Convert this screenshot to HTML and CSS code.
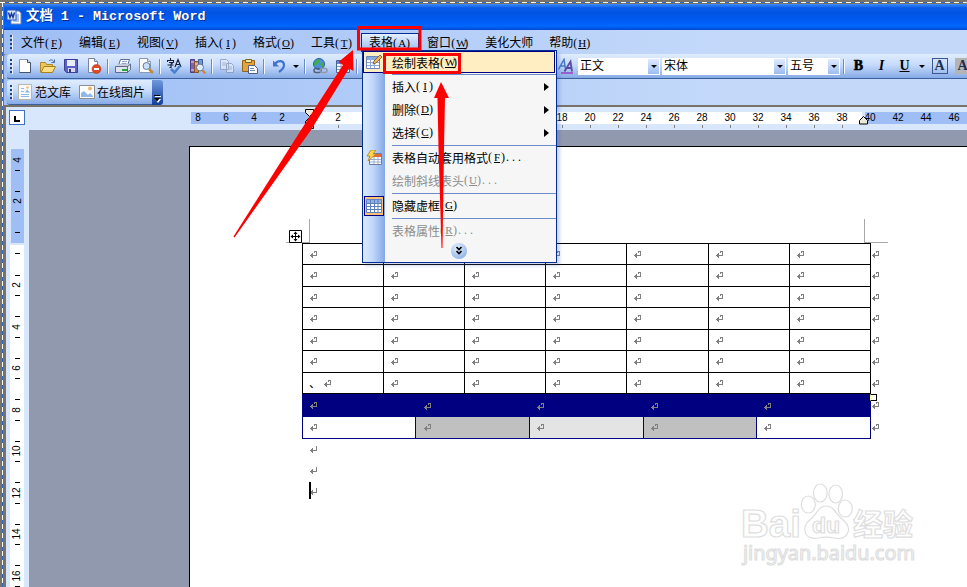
FILE: index.html
```
<!DOCTYPE html>
<html lang="zh-CN">
<head>
    <meta charset="utf-8">
    <title>文档 1 - Microsoft Word</title>
    <link rel="stylesheet" href="styles.css">
</head>
<body>
<div class="window">
    <div class="frame-top"></div>
    <div class="frame-left"></div>

    <header class="titlebar">
        <svg class="icon" viewBox="0 0 16 16">
            <path d="M5 2h8l2 2v11H5z" fill="#fff" stroke="#7183a8"/>
            <path d="M10 6h3M10 8h3M7 12h6M10 10h3" stroke="#5b86d6"/>
            <rect x="1" y="1" width="9" height="10" fill="#dce8ff" stroke="#2a5ac0"/>
            <path d="M2.500 3.500l1.500 5 1.500-4 1.500 4 1.500-5" fill="none" stroke="#143a9c" stroke-width="1.500"/>
        </svg>
        <h1>文档 1 - Microsoft Word</h1>
    </header>

    <nav class="menubar">
        <div class="grip"></div>
        <span class="menu">文件<i>(<u>F</u>)</i></span>
        <span class="menu">编辑<i>(<u>E</u>)</i></span>
        <span class="menu">视图<i>(<u>V</u>)</i></span>
        <span class="menu">插入<i>(<u>I</u>)</i></span>
        <span class="menu">格式<i>(<u>O</u>)</i></span>
        <span class="menu">工具<i>(<u>T</u>)</i></span>
        <span class="menu open">表格<i>(<u>A</u>)</i></span>
        <span class="menu">窗口<i>(<u>W</u>)</i></span>
        <span class="menu">美化大师</span>
        <span class="menu">帮助<i>(<u>H</u>)</i></span>
    </nav>

    <div class="toolbar">
        <div class="tools-left">
            <div class="grip"></div>
            <span class="btn"><svg class="icon" viewBox="0 0 16 16"><path d="M2.500 1.500h8l3 3v10h-11z" fill="#fff" stroke="#8b98b5"/><path d="M13.500 4.500v10h-11" fill="none" stroke="#44546f"/><path d="M10.500 1.500v3h3" fill="#cbdcf5" stroke="#44546f"/></svg></span>
            <span class="btn"><svg class="icon" viewBox="0 0 16 16"><path d="M.5 14V4.500h5l1 2h6V14z" fill="#f0c65a" stroke="#b08a2a"/><path d="M1 14.500l3-6h11.500l-3 6z" fill="#ffdf86" stroke="#a8801c"/><path d="M9 3c2-2 4-1 5 1M14.500 1.500v3h-3" fill="none" stroke="#4a6aa0"/></svg></span>
            <span class="btn"><svg class="icon" viewBox="0 0 16 16"><path d="M1.500 1.500h13v13h-11l-2-2z" fill="#5b60c8" stroke="#3b3f96"/><path d="M4 2h8v6H4z" fill="#e8edfa"/><path d="M5 10h7v4H5z" fill="#d5d9e8"/><path d="M6 11h2v3H6z" fill="#33387c"/></svg></span>
            <span class="btn"><svg class="icon" viewBox="0 0 16 16"><path d="M2.500.5h6l3 3v11h-9z" fill="#fff" stroke="#7583a5"/><path d="M8.500.5v3h3" fill="#d4e1f5" stroke="#7583a5"/><circle cx="10.500" cy="11" r="4.500" fill="#dc4a26" stroke="#a83010" stroke-width=".5"/><path d="M8 11h5" stroke="#fff" stroke-width="2"/></svg></span>
            <span class="sep"></span>
            <span class="btn"><svg class="icon" viewBox="0 0 16 16"><path d="M5.500 1.500h9l-2 6h-9z" fill="#fff" stroke="#5d6d8d"/><path d="M7 3.500h5M6.500 5.500h5" stroke="#8ea0c5"/><path d="M1 8l3-2h11l-2 2z" fill="#c5cbd8"/><path d="M.5 8.500h12v6H.5zM12.500 8.500l3-2.500v5.500l-3 3z" fill="#dfe3ec" stroke="#5d6d8d"/><path d="M7 11h5v2H7z" fill="#25a63c"/></svg></span>
            <span class="btn"><svg class="icon" viewBox="0 0 16 16"><path d="M1.500.5h8l3 3v11h-11z" fill="#fff" stroke="#8b98b5"/><path d="M9.500.5v3h3" fill="#cbdcf5" stroke="#8b98b5"/><path d="M11 11l4 4" stroke="#c68a32" stroke-width="2.500"/><circle cx="8.500" cy="8" r="3.500" fill="#c6e2f8" stroke="#667997"/></svg></span>
            <span class="sep"></span>
            <span class="btn"><svg class="icon" viewBox="0 0 16 16"><path d="M3.500 0v2M.5 4V2.500h6V4M2 4.500h4L4 6v3.500H2.500M.5 7h6M8 9l3-7.500L14 9M9 6.500h4" fill="none" stroke="#172038" stroke-width="1.100"/><path d="M4 11l3.500 3.500L13 8" fill="none" stroke="#4b7fd4" stroke-width="2.500"/></svg></span>
            <span class="btn"><svg class="icon" viewBox="0 0 16 16"><path d="M.5 1.500h4v13h-4z" fill="#7a65b8" stroke="#4a3b86"/><path d="M4.500 3.500h4v11h-4z" fill="#d68a4a" stroke="#8a5320"/><path d="M8.500 1.500h4v9h-4z" fill="#7698d4" stroke="#3d5f9c"/><path d="M1 4h3M5 6h3M1 12h3" stroke="#e6dbf5"/><path d="M12 12l3.500 3.500" stroke="#c68a32" stroke-width="2.200"/><circle cx="10" cy="9.500" r="3.500" fill="#dbecfb" stroke="#667997"/></svg></span>
            <span class="sep"></span>
            <span class="btn"><svg class="icon" viewBox="0 0 16 16" opacity=".75"><path d="M1.500 1.500h6l2 2v8h-8zM7.500 5.500h5l2 2v7h-7z" fill="#dfe8f7" stroke="#8798b8"/><path d="M3 5h4M3 7h4M9 9h4M9 11h4" stroke="#98a9c8"/></svg></span>
            <span class="btn"><svg class="icon" viewBox="0 0 16 16"><path d="M.5 2.500h12v11H.5z" fill="#e2a53e" stroke="#946318"/><path d="M3.500 1.500h6v3h-6z" fill="#f7e3a0" stroke="#7d6424"/><path d="M6.500 7.500h6l3 3v5h-9z" fill="#fff" stroke="#4d5f8a"/><path d="M8 10.500h4M8 12.500h5" stroke="#6c84b8"/></svg></span>
            <span class="sep"></span>
            <span class="btn"><svg class="icon" viewBox="0 0 16 16"><path d="M2 2.500v6h6z" fill="#4173d2"/><path d="M4 6c3-4 9-4 9 1 0 3-2 5-5 7" fill="none" stroke="#4173d2" stroke-width="2.200"/></svg></span>
            <span class="drop"></span>
            <span class="sep"></span>
            <span class="btn"><svg class="icon" viewBox="0 0 16 16"><circle cx="7" cy="6" r="5.500" fill="#4d8ee0" stroke="#295a9c"/><path d="M3 3l4-2 1 3-3 2-2 3-1-3zM8 6l3-2 1 3-2 3z" fill="#3fae49"/><rect x="2" y="10.500" width="7" height="4" rx="2" fill="none" stroke="#50607a" stroke-width="1.500"/><rect x="8" y="10.500" width="7" height="4" rx="2" fill="none" stroke="#8a98b0" stroke-width="1.500"/></svg></span>
            <span class="btn"><svg class="icon" viewBox="0 0 16 16"><path d="M1.500 2.500h13v12h-13z" fill="#fff" stroke="#45649c"/><path d="M2 3h12v3H2z" fill="#5c8ad8"/><path d="M2 8.500h12M2 11.500h12M6 6v8M10 6v8" stroke="#7d9acb"/></svg></span>
            <span class="sep"></span>
        </div>
        <span class="btn"><svg class="icon" viewBox="0 0 16 16"><path d="M.5 11.500L6 1.500l1.500 10M2.500 8H7" fill="none" stroke="#4778c8" stroke-width="1.500"/><path d="M6.500 13.500l6-10 1.500 10M8.500 10H13" fill="none" stroke="#5b4aa4" stroke-width="1.800"/><path d="M3 15h12" stroke="#9440c0" stroke-width="1.500"/></svg></span>
        <span class="combo style">正文<b></b></span>
        <span class="combo font">宋体<b></b></span>
        <span class="combo size">五号<b></b></span>
        <span class="sep"></span>
        <span class="btn letter bold">B</span>
        <span class="btn letter italic">I</span>
        <span class="btn letter under">U</span>
        <span class="drop"></span>
        <span class="btn letter boxed"><b>A</b></span>
        <span class="btn letter shaded"><b>A</b></span>
    </div>

    <div class="dock">
        <div class="addon">
            <div class="grip"></div>
            <svg class="icon" viewBox="0 0 16 16"><path d="M1.500.5h13v15h-13z" fill="#f9fafc" stroke="#b9b6ae"/><path d="M4 4.500h3M4 7.500h3M4 10.500h8M4 12.500h8" stroke="#93b7e4"/><path d="M8 8.500l2-3 3 3z" fill="#8eb5e2"/><circle cx="10.500" cy="3.500" r="1.300" fill="#f5bb72"/></svg>
            <span class="addon-text">范文库</span>
            <svg class="icon" viewBox="0 0 16 16"><path d="M.5 1.500h15v13H.5z" fill="#fff" stroke="#8c8c8c"/><path d="M2 13V9l3-2 4 4 2-2 3 3v1z" fill="#91b7e6"/><circle cx="11" cy="4.500" r="2" fill="#f0b86c"/></svg>
            <span class="addon-text">在线图片</span>
        </div>
        <div class="addon-end"><svg width="7" height="8" viewBox="0 0 7 8"><path d="M1 1.500h6" stroke="#fff"/><path d="M1 4h6L4 8z" fill="#fff"/><path d="M0 .5h6" stroke="#000"/><path d="M0 3h6L3 6.500z" fill="#000"/></svg></div>
    </div>

    <div class="ruler-row">
        <div class="tabstop"><svg width="6" height="6" viewBox="0 0 6 6"><path d="M1 0v5h5" fill="none" stroke="#000" stroke-width="2"/></svg></div>
        <div class="hruler">
            <span>8</span><span>6</span><span>4</span><span>2</span>
            <span class="zero"><svg class="indent" width="9" height="21" viewBox="0 0 9 21"><path d="M.5.5h8v3l-4 4-4-4zM.5 15.500v-3l4-4 4 4v3zM.5 15.500h8v4h-8z" fill="#ece9d8" stroke="#000"/></svg></span>
            <span class="tick">2</span>
            <!-- 4 to 16 sit behind the open menu -->
            <span></span><span></span><span></span><span></span><span></span><span></span><span></span>
            <span class="tick">18</span><span class="tick">20</span><span class="tick">22</span><span class="tick">24</span><span class="tick">26</span><span class="tick">28</span><span class="tick">30</span><span class="tick">32</span><span class="tick">34</span><span class="tick">36</span><span class="tick">38</span>
            <span class="last">40<svg class="right-indent" width="9" height="9" viewBox="0 0 9 9"><path d="M.5 8V4.500l4-4 4 4V8z" fill="#ece9d8" stroke="#000"/></svg></span>
            <span>42</span><span>44</span><span>46</span>
        </div>
    </div>

    <main class="workspace">
        <div class="vruler">
            <div class="vmargin">
                <div class="vcell first"><b>4</b></div>
                <div class="vcell"><b>2</b></div>
                <div class="vcell half-before"></div>
            </div>
            <div class="vbody">
                <div class="vcell half-after"></div>
                <div class="vcell"><b>2</b></div>
                <div class="vcell"><b>4</b></div>
                <div class="vcell"><b>6</b></div>
                <div class="vcell"><b>8</b></div>
                <div class="vcell"><b>10</b></div>
                <div class="vcell"><b>12</b></div>
                <div class="vcell"><b>14</b></div>
                <div class="vcell"><b>16</b></div>
            </div>
        </div>

        <div class="page">
            <div class="corners">
                <div class="corner left"><svg class="move" width="13" height="13" viewBox="0 0 13 13"><path d="M.5.5h12v12H.5z" fill="#fff" stroke="#000"/><path d="M6.500 2v9M2 6.500h9" stroke="#000"/><path d="M4.500 4l2-2.500 2 2.500zM4.500 9l2 2.500 2-2.500zM4 4.500L1.500 6.500 4 8.500zM9 4.500l2.500 2L9 8.500z"/></svg></div>
                <div class="corner right"></div>
            </div>
            <div class="tables">
                <div>
                    <div class="grid">
                        <div></div><div></div><div></div><div></div><div></div><div></div><div></div>
                        <div></div><div></div><div></div><div></div><div></div><div></div><div></div>
                        <div></div><div></div><div></div><div></div><div></div><div></div><div></div>
                        <div></div><div></div><div></div><div></div><div></div><div></div><div></div>
                        <div></div><div></div><div></div><div></div><div></div><div></div><div></div>
                        <div></div><div></div><div></div><div></div><div></div><div></div><div></div>
                        <div class="typed">、</div><div></div><div></div><div></div><div></div><div></div><div></div>
                    </div>
                    <div class="bands">
                        <div class="navy"></div><div class="navy second"></div><div class="navy low"></div><div class="navy low"></div><div class="navy low"></div>
                        <div></div><div class="grey second"></div><div class="pale"></div><div class="grey"></div><div></div>
                    </div>
                </div>
                <div class="row-ends">
                    <div></div><div></div><div></div><div></div><div></div><div></div><div></div>
                    <div class="resize"></div><div></div>
                </div>
            </div>
            <div class="para"></div>
            <div class="para"></div>
            <div class="para caret"></div>

            <svg class="watermark" width="190" height="90" viewBox="735 480 190 90">
                <g class="wm">
                    <text x="741" y="537" class="wm-big" textLength="60" lengthAdjust="spacingAndGlyphs">Bai</text>
                    <ellipse cx="808.300" cy="504.500" rx="7" ry="8.500"/>
                    <ellipse cx="820.300" cy="493" rx="6.800" ry="9"/>
                    <ellipse cx="835.700" cy="494" rx="6.800" ry="9"/>
                    <ellipse cx="845.300" cy="508.500" rx="7" ry="8.500"/>
                    <path d="M826 506c8 0 10 8 16 13 5 4 8 8 6 13-2 7-9 7-14 6-5-1-11-1-16 0-5 1-12 0-13-7-1-6 2-9 7-13 5-5 7-12 14-12z"/>
                    <text x="812" y="533" class="wm-du" textLength="28" lengthAdjust="spacingAndGlyphs">du</text>
                    <text x="853" y="535" class="wm-cn">经验</text>
                    <text x="743" y="560" class="wm-url" textLength="172" lengthAdjust="spacingAndGlyphs">jingyan.baidu.com</text>
                </g>
            </svg>
        </div>
    </main>

    <div class="dropdown">
        <div class="item hot"><span class="gutter"><svg class="icon" viewBox="0 0 16 16"><path d="M.5 2.500h13v12H.5z" fill="#fff" stroke="#6887c0"/><path d="M1 3h12v3H1z" fill="#89a9df"/><path d="M1 8.500h12M1 11.500h12M4.500 6v8M8.500 6v8" stroke="#8ea9d6"/><path d="M7 10l1-3 6-6 2 2-6 6z" fill="#e9b85e" stroke="#7b5620" stroke-width=".8"/></svg></span>绘制表格<i>(<u>W</u>)</i></div>
        <div class="line"></div>
        <div class="item">插入<i>(<u>I</u>)</i><span class="sub"></span></div>
        <div class="item">删除<i>(<u>D</u>)</i><span class="sub"></span></div>
        <div class="item">选择<i>(<u>C</u>)</i><span class="sub"></span></div>
        <div class="line"></div>
        <div class="item"><span class="gutter"><svg class="icon" viewBox="0 0 16 16"><path d="M3.500 3.500h12v11h-12z" fill="#fff" stroke="#6c7ea8"/><path d="M4 4h11v3H4z" fill="#e06a3c"/><path d="M4 9.500h11M4 12h11M8 7v7M12 7v7" stroke="#9aaed4"/><path d="M5 0h5L7 4h3l-8 7 2-5H1z" fill="#ffd84e" stroke="#b9801c" stroke-width=".8"/></svg></span>表格自动套用格式<i>(<u>F</u>)<em>...</em></i></div>
        <div class="item off">绘制斜线表头<i>(<u>U</u>)<em>...</em></i></div>
        <div class="line"></div>
        <div class="item"><span class="gutter checked"><svg class="icon" viewBox="0 0 16 16"><path d="M.5 1.500h15v13H.5z" fill="#fff" stroke="#5f82c0"/><path d="M1 2h14v3H1z" fill="#8fb0e6"/><path d="M1 5.500h14M1 8.500h14M1 11.500h14M4.500 2v12M8.500 2v12M12 2v12" stroke="#5d80bd"/></svg></span>隐藏虚框<i>(<u>G</u>)</i></div>
        <div class="line"></div>
        <div class="item off">表格属性<i>(<u>R</u>)<em>...</em></i></div>
        <div class="expand"><svg width="16" height="16" viewBox="0 0 16 16"><path d="M5.500 4L8 6.500 10.500 4M5.500 8L8 10.500 10.500 8" fill="none" stroke="#000" stroke-width="1.700"/></svg></div>
    </div>

    <svg class="notes" width="967" height="587" viewBox="0 0 967 587">
        <path d="M358.500 27.500h61.500v21.500h-61.500zM384.500 54.500h75v18h-75z" fill="none" stroke="#f00" stroke-width="3"/>
        <path d="M353 50l.5 21-4.500-2.500L311 130 234.500 237.500l-1-1L301 130 343 65l-4.500-3z" fill="#f00"/>
        <path d="M441 82l8 16h-4l-1 50L442.500 248h-1L438.500 148l-1-50H434z" fill="#f00"/>
    </svg>
</div>
</body>
</html>
```
FILE: styles.css
```
*, *::before {
    box-sizing: border-box;
}
body {
    margin: 0;
    font: 12px "Noto Sans CJK SC", sans-serif;
    color: #000;
}
.window {
    position: relative;
    width: 967px;
    height: 587px;
    padding: 4px 0 0 4px;
    overflow: hidden;
    display: flex;
    flex-direction: column;
    background: #77736a;
}

/* marching-ants frame */
.frame-top, .frame-left {
    position: absolute;
    left: 0;
    top: 2px;
    width: 967px;
    height: 1px;
    background: repeating-linear-gradient(90deg, #fff 0 5px, #316ac5 5px 9px);
}
.frame-left {
    left: 2px;
    width: 1px;
    height: 585px;
    background: repeating-linear-gradient(180deg, #fff 0 5px, #316ac5 5px 9px);
}

.titlebar {
    height: 26px;
    flex: none;
    display: flex;
    align-items: center;
    gap: 4px;
    padding-left: 2px;
    background: linear-gradient(#3c8cf7, #0a5ae8 15%, #0054e3 35%, #005cf5 65%, #0067fd 85%, #0048d0);
}
.titlebar h1 {
    margin: 0;
    font: bold 13.4px/26px "Liberation Mono", "Noto Sans CJK SC", monospace;
    color: #fff;
    text-shadow: 1px 1px #0a2f8c;
    white-space: pre;
}
.icon {
    width: 16px;
    height: 16px;
    flex: none;
}

.menubar {
    height: 24px;
    flex: none;
    display: flex;
    align-items: center;
    background: linear-gradient(90deg, #9ebef5, #c4d9fa 75%);
}
.grip {
    width: 3px;
    height: 15px;
    flex: none;
    margin: 0 0 0 6px;
    background: repeating-linear-gradient(#27417a 0 2px, transparent 2px 4px);
    border-right: 1px solid #e8f1ff;
}
.menu {
    padding: 0 7px;
    margin: 0 1px;
    height: 19px;
    line-height: 15px;
    border: 1px solid transparent;
    border-width: 1px 0;
    white-space: nowrap;
}
.menu.open {
    background: linear-gradient(#e3effe, #98bbf0);
    border-color: #002d96;
    box-shadow: 1px 0 #002d96, -1px 0 #002d96;
}
/* access keys: three half-width characters, 18px in all */
i {
    font-family: "Liberation Serif", serif;
    font-style: normal;
    letter-spacing: 1px;
}
u {
    display: inline-block;
    width: 8px;
    font-size: 11px;
    letter-spacing: 0;
    text-align: center;
}
em {
    font-style: normal;
    letter-spacing: 3px;
}

.toolbar {
    height: 25px;
    flex: none;
    display: flex;
    align-items: center;
    background: linear-gradient(#dfecfe, #c6dbfb 45%, #86aae5);
    border-bottom: 1px solid #3b619c;
    margin-left: 3px;
    border-radius: 3px 0 0 2px;
    box-shadow: -3px 0 #9ebef5;
}
.tools-left {
    display: flex;
    align-items: center;
    width: 547px;
    flex: none;
}
.tools-left .grip {
    margin: 0 0 0 3px;
}
.btn {
    width: 23px;
    height: 22px;
    flex: none;
    display: flex;
    align-items: center;
    justify-content: center;
}
.sep {
    width: 6px;
    height: 15px;
    flex: none;
    background: linear-gradient(90deg, transparent 2px, #6a8ccb 2px 3px, #f1f6ff 3px 4px, transparent 4px);
}
.drop {
    width: 12px;
    flex: none;
    display: flex;
    justify-content: center;
}
.drop::after, .combo b::after {
    content: "";
    border: 3px solid transparent;
    border-top-color: #000;
    border-bottom: 0;
}
.combo {
    height: 17px;
    flex: none;
    display: flex;
    justify-content: space-between;
    margin: 0 1px;
    padding: 1px 1px 1px 2px;
    line-height: 11px;
    background: #fff;
}
.combo b {
    width: 11px;
    display: flex;
    align-items: center;
    justify-content: center;
    background: linear-gradient(#e0ecfe, #9dbcef);
}
.combo.style {
    width: 82px;
}
.combo.font {
    width: 124px;
}
.combo.size {
    width: 52px;
}
.letter {
    font: bold 14px "Liberation Serif", serif;
}
.letter.bold {
    -webkit-text-stroke: 0.6px #000;
}
.letter.italic {
    font-style: italic;
}
.letter.under {
    text-decoration: underline;
}
.letter b {
    width: 16px;
    height: 16px;
    line-height: 15px;
    text-align: center;
    color: #1c2f50;
}
.boxed b {
    border: 1px solid #3a5896;
    line-height: 14px;
}
.shaded b {
    background: #b4b4b4;
}

.dock {
    height: 26px;
    flex: none;
    display: flex;
    padding: 1px 0 0 3px;
    background: linear-gradient(90deg, #9ebef5, #c4d9fa 75%);
}
.addon {
    width: 145px;
    height: 25px;
    display: flex;
    align-items: center;
    background: linear-gradient(#dfecfe, #c6dbfb 45%, #86aae5);
    border-bottom: 1px solid #3b619c;
    border-radius: 3px 0 0 3px;
}
.addon .grip {
    margin: 0 4px 0 3px;
}
.addon-text {
    margin: 0 8px 2px 2px;
    white-space: nowrap;
}
.addon-end {
    width: 11px;
    height: 25px;
    display: flex;
    align-items: flex-end;
    justify-content: center;
    padding-bottom: 2px;
    background: linear-gradient(#7098dc, #0f3f9c);
    border-radius: 0 3px 3px 0;
}

.ruler-row {
    height: 25px;
    flex: none;
    display: flex;
    background: #d8e7fc;
    margin-left: 2px;
    border-top: 2px solid #77736a;
}
.tabstop {
    width: 16px;
    height: 15px;
    flex: none;
    margin: 3px 0 0 3px;
    display: flex;
    align-items: center;
    justify-content: center;
    background: #fff;
    border: 1px solid #3f70c8;
    padding-top: 3px;
}
.hruler {
    display: flex;
    flex: none;
    width: 784px;
    height: 12px;
    margin: 5px 0 0 159px;
    background: linear-gradient(90deg, transparent 7px, #9ebef5 7px 125px, #fff 125px 678px, #d8e7fc 678px 681px, #9ebef5 681px);
}
.hruler span {
    width: 28px;
    flex: none;
    text-align: center;
    font: 10px/12px "Liberation Sans", sans-serif;
}
.tick::after {
    content: "";
    display: block;
    width: 1px;
    height: 3px;
    margin: 1px auto 0;
    background: #808080;
}
.zero, .last {
    position: relative;
}
.indent {
    position: absolute;
    left: 9px;
    top: -3px;
}
.right-indent {
    position: absolute;
    left: 3px;
    top: 4px;
}

.workspace {
    flex: 1;
    min-height: 0;
    display: flex;
    margin-left: 2px;
    background: #9199ae;
    overflow: hidden;
}
.vruler {
    width: 23px;
    flex: none;
    padding: 19px 5px 0 4px;
    background: #d8e7fc;
    overflow: hidden;
}
.vmargin {
    height: 94px;
    margin-left: 1px;
    background: #9ebef5;
}
.vbody {
    height: 360px;
    margin-top: 2px;
    background: #fff;
}
.vcell {
    height: 41.5px;
    display: flex;
    flex-direction: column;
    align-items: center;
    justify-content: space-between;
    padding: 10px 0;
}
.vcell::before, .vcell::after {
    content: "";
    width: 5px;
    height: 1px;
    background: #000;
}
.vcell b {
    font: 10px/10px "Liberation Sans", sans-serif;
    transform: rotate(-90deg);
}
.vcell.first {
    height: 31.5px;
    padding-top: 6px;
}
.vcell.first::before {
    display: none;
}
.half-before, .half-after {
    height: 20px;
    padding: 10px 0 0;
}
.half-after {
    padding-top: 8px;
    height: 19.5px;
}
.half-before::after, .half-after::after {
    display: none;
}

.page {
    position: relative;
    flex: 1;
    margin: 16px 0 0 160px;
    border: 1px solid #000;
    border-width: 1px 0 0 1px;
    background: #fff;
}
.corners {
    display: flex;
    justify-content: space-between;
    width: 602px;
    margin: 72px 0 0 96px;
}
.corner {
    position: relative;
    width: 24px;
    height: 24px;
    border: 0 solid #a8a8a8;
    border-bottom-width: 1px;
}
.corner.left {
    border-right-width: 1px;
}
.corner.right {
    border-left-width: 1px;
}
.move {
    position: absolute;
    left: 3px;
    top: 11px;
}
.tables {
    display: flex;
    margin-left: 112px;
}
.grid {
    display: grid;
    grid-template-columns: 81px 81px 81px 81px 82px 81px 81px;
    grid-template-rows: 21px 22px 21px 22px 21px 22px 21px;
    border: 1px solid #000;
    border-width: 1px 0 0 1px;
}
.grid div {
    border: 1px solid #000;
    border-width: 0 1px 1px 0;
}
.bands {
    display: grid;
    grid-template-columns: 113px 114px 114px 113px 114px;
    grid-template-rows: 23px 22px;
    border-left: 1px solid #000080;
}
.bands div {
    border: 1px solid #000080;
    border-width: 0 1px 1px 0;
}
.bands .navy {
    background-color: #000080;
}
.bands .grey {
    background-color: #c0c0c0;
}
.bands .pale {
    background-color: #e4e4e4;
}
.row-ends {
    display: grid;
    width: 14px;
    padding-top: 1px;
    grid-template-rows: 21px 22px 21px 22px 21px 22px 21px 23px 22px;
}
/* end-of-cell mark */
.grid div, .bands div, .row-ends div {
    background-image: url("data:image/svg+xml,%3Csvg xmlns='http://www.w3.org/2000/svg' width='7' height='7' shape-rendering='crispEdges'%3E%3Cpath d='M4.500 2V.5M4 .5H7M6.500 0V5M0 4.500H7M2.500 2v5M1.500 3v3' fill='none' stroke='%23808080'/%3E%3C/svg%3E");
    background-repeat: no-repeat;
    background-position: 7px 7px;
}
.bands .navy {
    background-position: 7px 8px;
}
.bands .low {
    background-position: 7px 9px;
}
.bands .second {
    background-position: 8px 7px;
}
.bands .navy.second {
    background-position: 8px 9px;
}
.row-ends div {
    background-position: 1px 7px;
}
.grid .typed {
    padding-left: 6px;
    line-height: 20px;
    background-position: 21px 7px;
}
.row-ends .resize {
    position: relative;
    background-position: 1px 8px;
}
.resize::before {
    content: "";
    position: absolute;
    left: -1px;
    top: 0;
    width: 7px;
    height: 7px;
    border: 1px solid #000;
    border-left-color: #ffff80;
    background: #fff;
}
.para {
    height: 21px;
    margin-left: 119px;
    background: url("data:image/svg+xml,%3Csvg xmlns='http://www.w3.org/2000/svg' width='7' height='7' shape-rendering='crispEdges'%3E%3Cpath d='M6.500 0V5M0 4.500H7M2.500 2v5M1.500 3v3' fill='none' stroke='%23808080'/%3E%3C/svg%3E") no-repeat 1px 7px;
}
.caret::before {
    content: "";
    display: block;
    width: 2px;
    height: 17px;
    background: #000;
    transform: translateY(1px);
}

.watermark {
    position: absolute;
    left: 545px;
    top: 333px;
}
.wm {
    fill: #fff;
    stroke: #dedede;
    stroke-width: 1.2px;
}
.wm-big {
    font: bold 38px "Liberation Sans", sans-serif;
}
.wm-du {
    font: bold 22px "Liberation Sans", sans-serif;
}
.wm-cn {
    font: bold 30px "Noto Sans CJK SC", sans-serif;
}
.wm-url {
    font: 20px "Noto Sans", sans-serif;
}

.dropdown {
    position: absolute;
    left: 362px;
    top: 50px;
    width: 195px;
    height: 213px;
    border: 1px solid #002d96;
    background: linear-gradient(90deg, #dceafe, #c0d7fa 10px, #83a8e6 22px, #f6f6f6 22px);
    box-shadow: 3px 3px 3px rgba(70, 100, 170, 0.25);
}
.item {
    position: relative;
    display: flex;
    align-items: center;
    height: 23px;
    padding: 0 0 2px 29px;
    line-height: 21px;
    white-space: nowrap;
}
.item.off {
    color: #8d8d8d;
}
.item.hot {
    height: 22px;
    margin: 0 1px 1px 0;
    padding: 0 0 0 28px;
    border: 1px solid #000080;
    background: #ffeec2;
}
.item .gutter {
    position: absolute;
    left: 1px;
    top: 1px;
    width: 20px;
    height: 20px;
    display: flex;
    align-items: center;
    justify-content: center;
}
.item.hot .gutter {
    left: 0;
    top: 0;
}
.item .checked {
    background: #ffc078;
    border: 1px solid #000080;
}
.line {
    height: 2px;
    margin-left: 29px;
    border-top: 1px solid #6a8ccb;
}
.sub {
    margin-left: auto;
    margin-right: 7px;
    border: 4px solid transparent;
    border-left: 5px solid #000;
    border-right: 0;
}
.expand {
    width: 16px;
    height: 16px;
    margin-left: 88px;
    border-radius: 50%;
    background: radial-gradient(circle at 40% 30%, #e3effe, #7ba2e2);
}

/* red call-outs drawn over the window */
.notes {
    position: absolute;
    left: 0;
    top: 0;
}
```
